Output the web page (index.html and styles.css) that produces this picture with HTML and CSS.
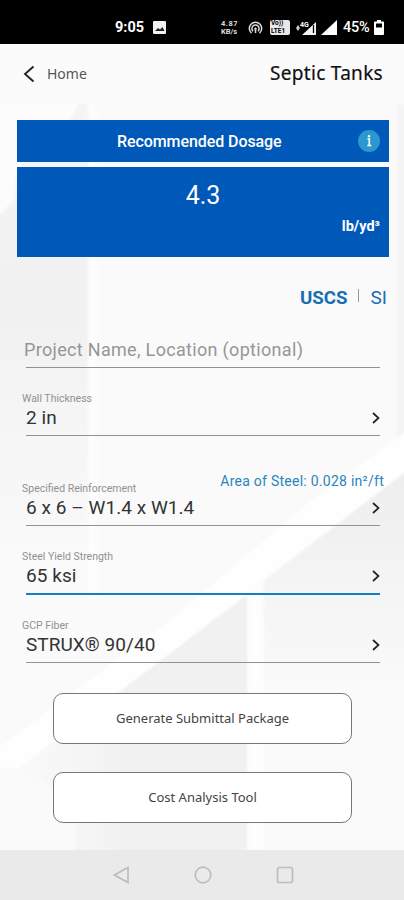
FILE: index.html
```
<!DOCTYPE html>
<html lang="en">
<head>
<meta charset="utf-8">
<title>Septic Tanks</title>
<link rel="stylesheet" href="styles.css">
</head>
<body>
<div class="phone">
  <svg class="backdrop" viewBox="0 0 404 900" aria-hidden="true">
    <defs>
      <linearGradient id="left" x1="0" y1="0" x2="0" y2="1"><stop offset="0" stop-color="#f5f5f5"/><stop offset=".45" stop-color="#f1f1f1"/><stop offset="1" stop-color="#fafafa"/></linearGradient>
      <linearGradient id="right" x1="0" y1="0" x2="0" y2="1"><stop offset="0" stop-color="#eeeeee"/><stop offset="1" stop-color="#fafafa"/></linearGradient>
      <linearGradient id="base" x1="0" y1="0" x2="1" y2="0"><stop offset="0" stop-color="#fafafa"/><stop offset=".5" stop-color="#f1f1f1"/><stop offset="1" stop-color="#f1f1f1"/></linearGradient>
      <filter id="soft"><feGaussianBlur stdDeviation="1"/></filter>
    </defs>
    <rect width="404" height="900" fill="#fafafa"/>
    <g filter="url(#soft)">
    <path d="M-4 100H88V560H-4Z" fill="url(#left)"/>
    <path d="M-4 100H80L70 120L17 170L14 200L0 215H-4Z" fill="#fcfcfc"/>
    <path d="M88 104H97V600H88Z" fill="#fdfdfd"/>
    <path d="M397 104H408V450H397Z" fill="#f4f4f4"/>
    <path d="M408 430V470L264 580L100 710L20 768H-4V750L170 620L310 502Z" fill="#fefefe"/>
    <path d="M408 470V690H264V580Z" fill="url(#right)"/>
    <path d="M247 595V856H75V800L18 768L115 695Z" fill="url(#base)"/>
    <path d="M248 590L264 578V856H248Z" fill="#fdfdfd"/>
    </g>
  </svg>
  <div class="status">
    <span class="time">9:05</span>
    <svg class="picture" width="13" height="13" viewBox="0 0 13 13"><rect width="13" height="13" rx="1" fill="#f2f2f2"/><path d="M2 10l3-3 2 1.5L9.500 6l2 4z" fill="#222"/></svg>
    <span class="rate"><b>4.87</b><b>KB/s</b></span>
    <svg class="hotspot" width="15" height="14" viewBox="0 0 15 14" fill="none" stroke="#ddd" stroke-width="1.500"><path d="M3.500 12.200A6.200 6.200 0 1 1 11.500 12.200M5 10.200A3.600 3.600 0 1 1 10 10.200"/><circle cx="7.500" cy="7.800" r="1.200" fill="#ddd" stroke="none"/><path d="M7.500 8v4"/></svg>
    <span class="volte"><b>Vo))</b><b>LTE1</b></span>
    <svg class="signal" width="21" height="16" viewBox="0 0 21 16"><path d="M0 8l2-3 2 3-2 3z" fill="#ccc"/><path d="M6 15L20 2V15Z" fill="#f4f4f4"/><path d="M17.500 5v8" stroke="#000" stroke-width="1.300"/><text x="4" y="7" class="fourg">4G</text></svg>
    <svg class="signal2" width="16" height="15" viewBox="0 0 16 15"><path d="M0 15L16 0V15Z" fill="#fff"/></svg>
    <span class="percent">45%</span>
    <svg class="battery" width="10" height="15" viewBox="0 0 10 15"><path d="M3 0h4v1.500h2q1 0 1 1V14q0 1-1 1H1q-1 0-1-1V2.500q0-1 1-1h2z" fill="#fff"/><path d="M2 3.500h6v4H2z" fill="#000"/></svg>
  </div>
  <header class="header">
    <svg width="12" height="18" viewBox="0 0 12 18" fill="none" stroke="#222" stroke-width="1.900"><path d="M10.500 1.500L2 9l8.500 7.500"/></svg>
    <span class="home">Home</span>
    <h1>Septic Tanks</h1>
  </header>
  <main class="content">
    <div class="banner"><span class="banner-title">Recommended Dosage</span><span class="info"><svg width="22" height="22" viewBox="0 0 22 22"><circle cx="11" cy="11" r="11" fill="#2b98d0"/><path d="M9.500 9H11.300V15.300M9.300 15.500h4" fill="none" stroke="#fff" stroke-width="1.600"/><circle cx="11" cy="6.300" r="1.200" fill="#fff"/></svg></span></div>
    <div class="dosage"><div class="amount"><span>4.3</span></div><div class="unit"><span>lb/yd³</span></div></div>
    <div class="systems"><span class="uscs">USCS</span><i></i><span class="si">SI</span></div>
    <div class="project"><span>Project Name, Location (optional)</span></div>
    <div class="field wall"><label><span>Wall Thickness</span></label><div class="value"><span>2 in</span><svg width="8" height="12" viewBox="0 0 8 12"><path d="M1 1l5.500 5L1 11"/></svg></div></div>
    <div class="field reinforcement"><label><span>Specified Reinforcement</span><span class="area">Area of Steel: 0.028 in²/ft</span></label><div class="value"><span>6 x 6 – W1.4 x W1.4</span><svg width="8" height="12" viewBox="0 0 8 12"><path d="M1 1l5.500 5L1 11"/></svg></div></div>
    <div class="field yield"><label><span>Steel Yield Strength</span></label><div class="value"><span>65 ksi</span><svg width="8" height="12" viewBox="0 0 8 12"><path d="M1 1l5.500 5L1 11"/></svg></div></div>
    <div class="field fiber"><label><span>GCP Fiber</span></label><div class="value"><span>STRUX® 90/40</span><svg width="8" height="12" viewBox="0 0 8 12"><path d="M1 1l5.500 5L1 11"/></svg></div></div>
    <div class="actions"><button>Generate Submittal Package</button><button>Cost Analysis Tool</button></div>
  </main>
  <nav class="nav">
    <svg width="17" height="18" viewBox="0 0 17 18"><path d="M15 1.500V16.500L1.500 9Z"/></svg>
    <svg width="18" height="18" viewBox="0 0 18 18"><circle cx="9" cy="9" r="7.800"/></svg>
    <svg width="18" height="18" viewBox="0 0 18 18"><rect x="1.500" y="1.500" width="15" height="15" rx="2"/></svg>
  </nav>
</div>
</body>
</html>
```
FILE: styles.css
```
* { box-sizing: border-box; }
body { margin: 0; font-family: Roboto, sans-serif; color: #333; }
.phone { position: relative; width: 404px; height: 900px; overflow: hidden; display: flex; flex-direction: column; isolation: isolate; }
.backdrop { position: absolute; inset: 0; z-index: -1; width: 404px; height: 900px; }
svg { flex: none; display: block; }
span { white-space: nowrap; }

.status { height: 44px; flex: none; background: #000; color: #fff; display: flex; align-items: center; padding: 11px 0 0 115px; }
.time { width: 38px; font: 700 14.5px/16px Roboto, sans-serif; }
.picture { margin-right: 55px; }
.rate, .volte { display: flex; flex-direction: column; }
.rate { width: 19px; color: #ddd; }
.rate b { font-size: 7.5px; line-height: 8px; }
.rate b:first-child { letter-spacing: 0.5px; }
.hotspot { margin-left: 8px; }
.volte { width: 20px; height: 15px; margin-left: 7px; background: #e8e8e8; color: #000; border-radius: 2px; padding: 0 1px; }
.volte b { font-size: 6.5px; line-height: 7.5px; }
.signal { margin: 0 4px 0 6px; }
.fourg { font: 700 7px Roboto, sans-serif; fill: #fff; }
.signal2 { margin-right: 6px; }
.percent { width: 31px; font: 500 14.5px/16px Roboto, sans-serif; letter-spacing: -0.2px; }

.header { height: 60px; flex: none; display: flex; align-items: center; background: #fbfbfb; padding: 0 21px 0 23px; }
.home { margin-left: 12px; font: 400 14px/20px "Noto Sans", sans-serif; color: #555; }
h1 { margin: 0 0 0 auto; padding-bottom: 2px; font: 400 19px/24px "Noto Sans", sans-serif; letter-spacing: 0.3px; color: #111; -webkit-text-stroke: 0.2px #111; white-space: nowrap; }

.content { flex: 1; padding: 16px 15px 0 17px; }
.banner { height: 42px; display: flex; align-items: center; background: #0058b8; color: #fff; padding: 0 9px 0 100px; }
.banner-title { font: 500 16px/20px Roboto, sans-serif; letter-spacing: -0.08px; padding-top: 2px; }
.info { margin-left: auto; }
.dosage { height: 90px; margin-top: 5px; background: #0058b8; color: #fff; padding-top: 14px; }
.amount { text-align: center; font-size: 25px; line-height: 30px; }
.unit { display: flex; justify-content: flex-end; padding: 7px 9px 0 0; font: 700 14.5px/18px Roboto, sans-serif; }
.systems { height: 24px; margin-top: 29px; padding-right: 2px; display: flex; justify-content: flex-end; align-items: center; color: #176fb2; font-size: 19px; line-height: 24px; }
.uscs { font-weight: 700; font-size: 18.7px; }
.systems i { width: 1px; height: 13px; background: #999; margin: 0 12px 5px 10px; }
.project { height: 29px; margin: 29px 9px 0; border-bottom: 1px solid #929292; color: #969696; font-size: 18px; line-height: 22px; letter-spacing: 0.32px; }
.project span { margin-left: -2px; }
.field { height: 44px; margin: 0 9px; border-bottom: 1px solid #929292; }
.field label { display: flex; justify-content: space-between; height: 14px; margin: 0 -4px 0 -4px; font-size: 10.5px; line-height: 14px; color: #919191; }
.value { height: 23px; display: flex; align-items: center; justify-content: space-between; font-size: 19px; line-height: 23px; letter-spacing: 0.05px; color: #333; }
.value svg { fill: none; stroke: #222; stroke-width: 1.7; }
.wall { margin-top: 24px; }
.reinforcement { margin-top: 46px; }
.area { font-size: 14px; line-height: 14px; letter-spacing: 0.26px; color: #2b84bf; margin-top: -8px; }
.yield { margin-top: 24px; height: 45px; border-bottom: 2px solid #1680be; }
.fiber { margin-top: 24px; }
.actions { display: flex; flex-direction: column; gap: 28px; margin: 30px 37px 0 36px; }
button { height: 51px; border: 1px solid #777; border-radius: 10px; background: #fff; padding: 0 0 2px; color: #444; font: 400 13px/20px "Noto Sans", sans-serif; }

.nav { height: 50px; flex: none; background: #eaeaea; display: flex; padding: 16px 0 0 113px; gap: 64px; }
.nav svg { fill: none; stroke: #bdbdbd; stroke-width: 1.7; }
```
